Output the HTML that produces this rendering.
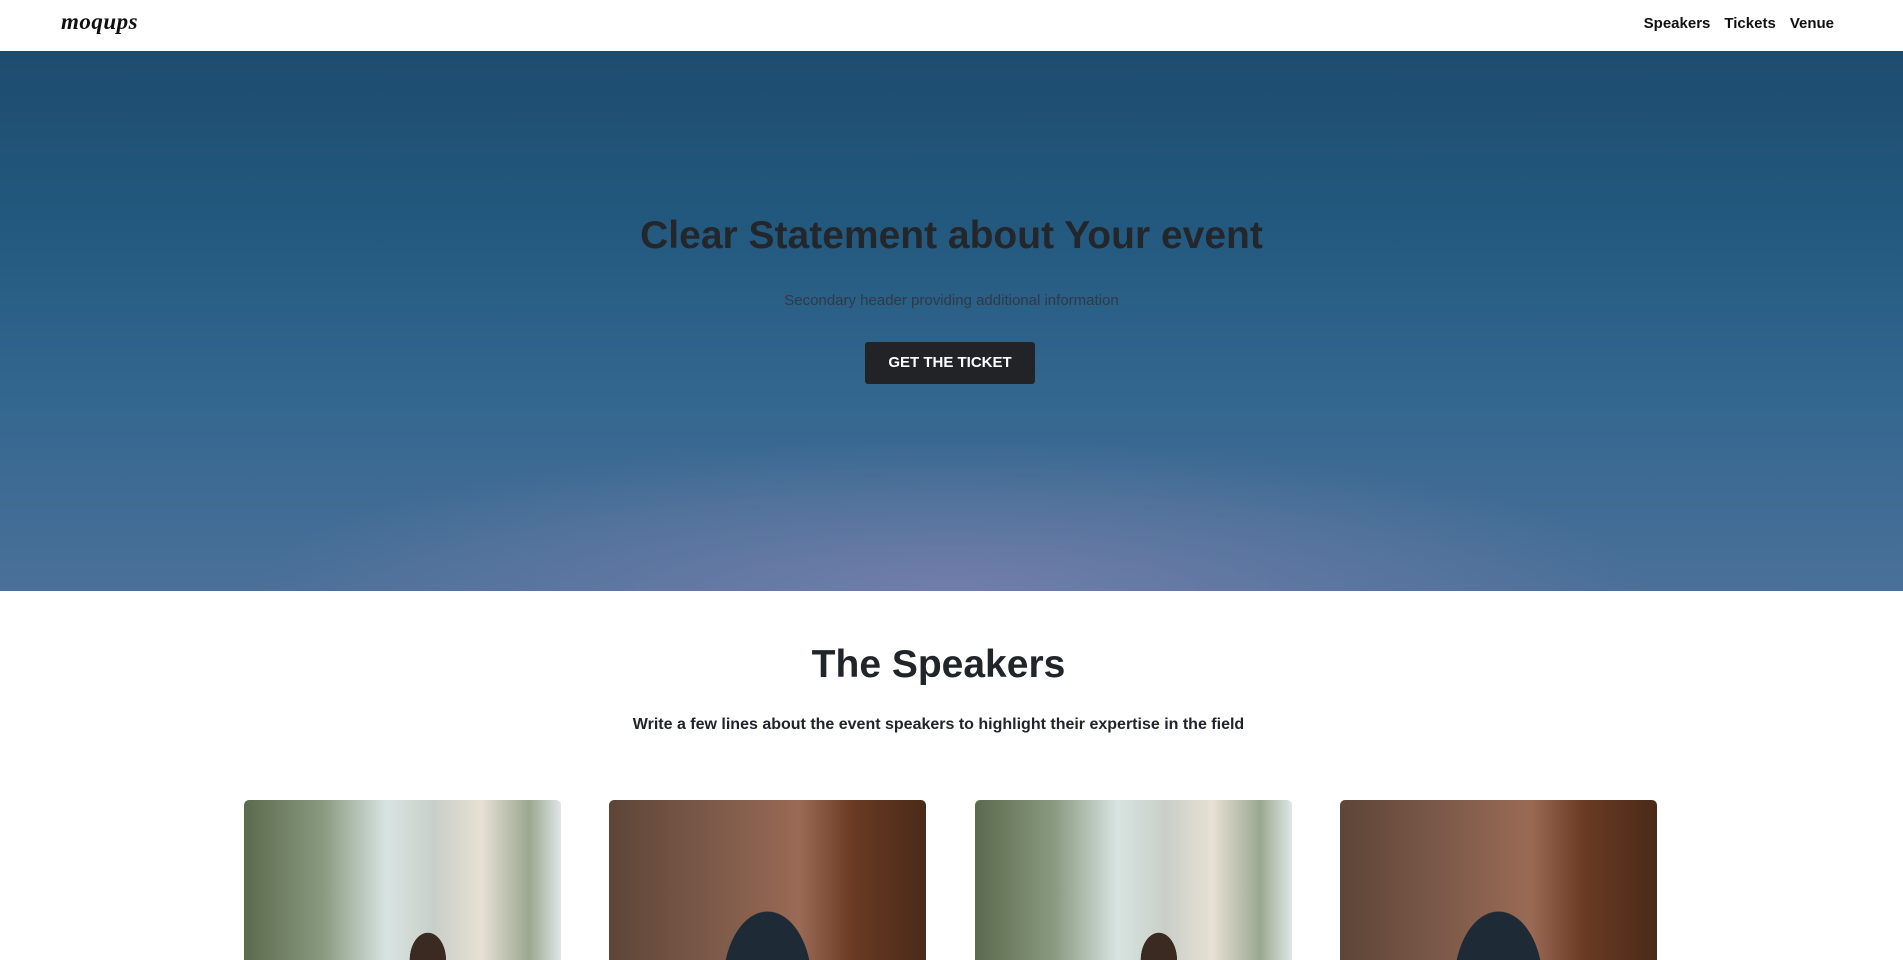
<!DOCTYPE html>
<html><head><meta charset="utf-8"><style>
*{margin:0;padding:0;box-sizing:border-box}
body{width:1903px;height:936px;overflow:hidden;background:#fff;font-family:"Liberation Sans",sans-serif;color:#212529}
nav{height:51px;position:relative;background:#fff}
.logo{position:absolute;left:61px;top:9px;font-family:"Liberation Serif",serif;font-style:italic;font-weight:bold;font-size:23px;color:#111;letter-spacing:0.5px}
.links{position:absolute;right:69px;top:15px;font-size:15px;font-weight:bold;color:#111}
.links span{margin-left:14px}
.hero{position:absolute;top:51px;left:0;width:1903px;height:540px;
background:radial-gradient(ellipse 700px 150px at 50% 100%,rgba(120,128,172,0.85),rgba(120,128,172,0) 100%),linear-gradient(#1d4c6f 0%,#245a80 35%,#34678f 65%,#4a7099 100%)}
.hero h1{position:absolute;top:163px;width:100%;text-align:center;font-size:39px;color:#23272b;font-weight:bold}
.hero p{position:absolute;top:241px;width:100%;text-align:center;font-size:15px;color:#2f3a48}
.btn{position:absolute;left:865px;top:291px;width:170px;height:42px;background:#222327;border-radius:3px;color:#fff;font-weight:bold;font-size:15px;text-align:center;line-height:42px}
h2{position:absolute;top:643px;left:0;width:1877px;text-align:center;font-size:39px;font-weight:bold;color:#212529}
.sub{position:absolute;top:716px;left:0;width:1877px;text-align:center;font-size:16px;font-weight:bold;color:#212529}
.card{position:absolute;top:800px;width:317px;height:160px;border-radius:5px 5px 0 0;overflow:hidden}
.w{background:radial-gradient(ellipse 30px 45px at 58% 100%,#3a2a22 0,#3a2a22 60%,transparent 61%),linear-gradient(90deg,#5b6a4c 0%,#8a9a80 25%,#d8e4e2 45%,#c9cfc8 60%,#e8e0d4 75%,#9aa890 90%,#dfe6e6 100%)}
.m{background:radial-gradient(ellipse 55px 90px at 50% 115%,#1e2a35 0,#1e2a35 80%,transparent 81%),linear-gradient(90deg,#5d4538 0%,#7a5848 30%,#9a6a55 60%,#6a3a22 77%,#4a2a18 100%)}
</style></head><body>
<nav><div class="logo">moqups</div><div class="links"><span>Speakers</span><span>Tickets</span><span>Venue</span></div></nav>
<div class="hero"><h1>Clear Statement about Your event</h1><p>Secondary header providing additional information</p><div class="btn">GET THE TICKET</div></div>
<h2>The Speakers</h2>
<div class="sub">Write a few lines about the event speakers to highlight their expertise in the field</div>
<div class="card w" style="left:244px"></div>
<div class="card m" style="left:609px"></div>
<div class="card w" style="left:975px"></div>
<div class="card m" style="left:1340px"></div>
</body></html>
